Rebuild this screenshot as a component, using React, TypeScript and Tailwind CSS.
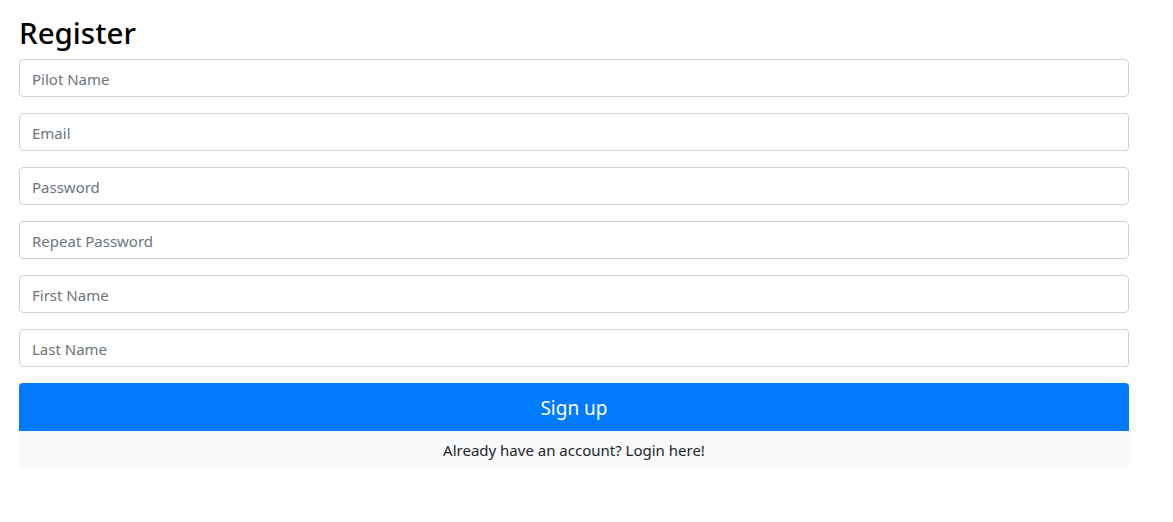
export default function App() {
  const fields = ["Pilot Name", "Email", "Password", "Repeat Password", "First Name", "Last Name"];
  const types: Record<string, string> = { Email: "email", Password: "password", "Repeat Password": "password" };
  return (
    <div className="min-h-[522px] bg-white pt-[13px] pl-[19px] text-[#212529]" style={{ fontFamily: '"Noto Sans", "Open Sans", sans-serif' }}>
      <div className="w-[1110px]">
        <h2 className="mb-2 h-[38px] pt-[2px] text-[29.5px] font-medium leading-[1.2] text-black">Register</h2>
        <form className="flex flex-col">
          {fields.map((f) => (
            <input
              key={f}
              type={types[f] ?? "text"}
              placeholder={f}
              className="mb-4 block h-[38px] w-full rounded border border-[#ced4da] bg-white px-3 pt-[7px] pb-[5px] text-[15px] leading-normal text-[#495057] placeholder:text-[#6c757d] outline-none"
            />
          ))}
          <button type="button" className="block h-[48px] w-full rounded-t-[4px] bg-[#007bff] pt-[2px] text-[19px] leading-normal text-white">
            Sign up
          </button>
          <div className="flex h-[38px] items-center justify-center rounded-b-[4px] bg-[#f8f9fa] pt-[1px] text-[15px] text-[#212529]">
            Already have an account? Login here!
          </div>
        </form>
      </div>
    </div>
  );
}
